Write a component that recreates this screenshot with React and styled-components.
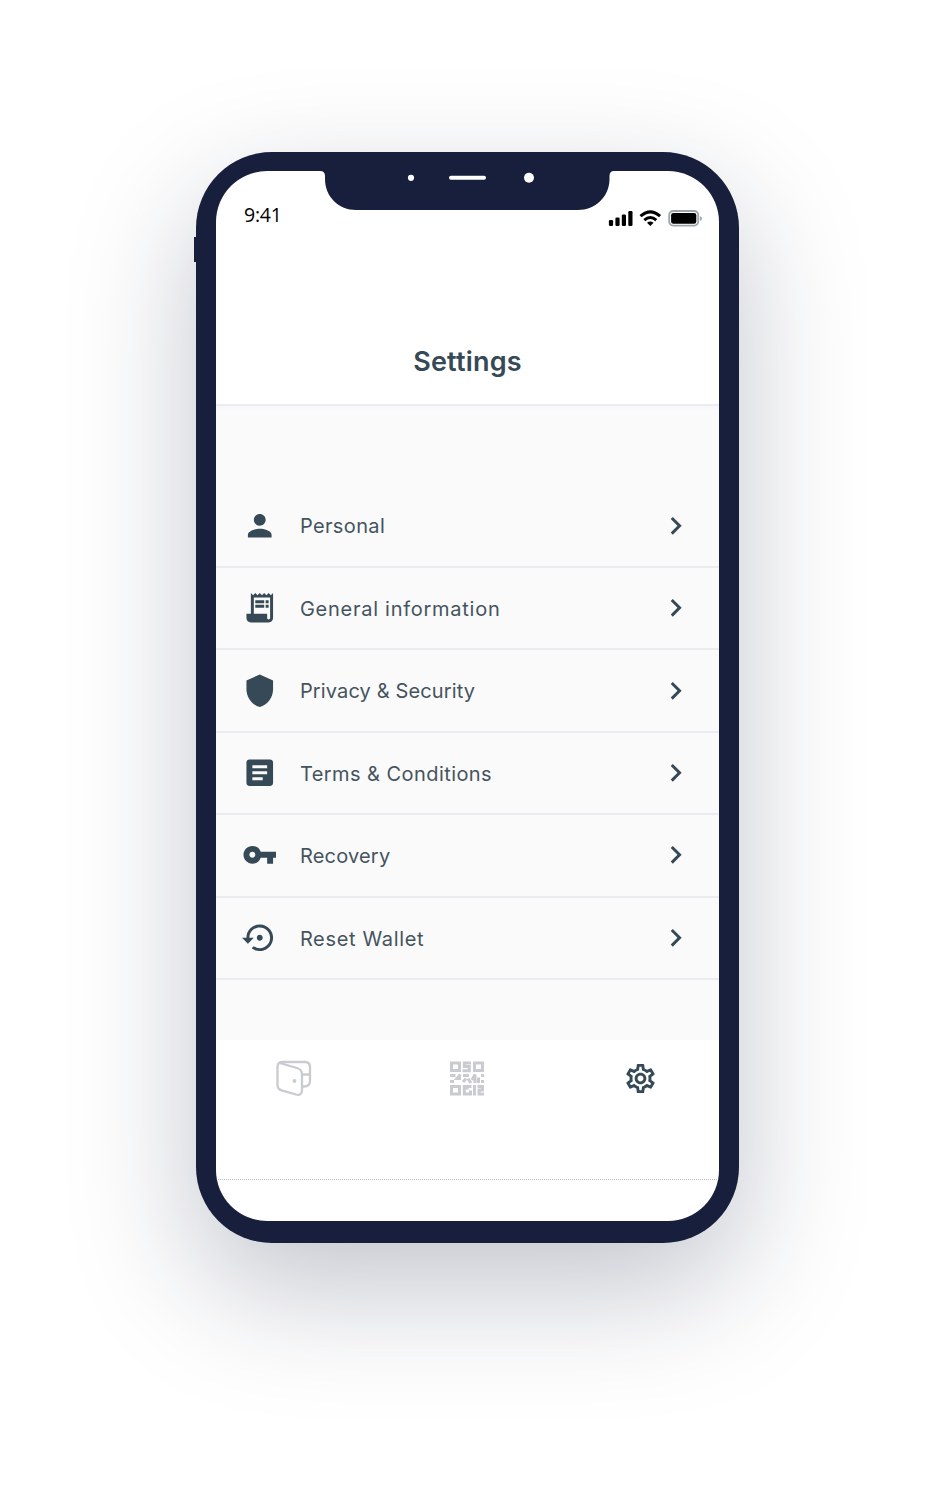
import React from 'react';
import styled, { createGlobalStyle } from 'styled-components';
import {
  MdPerson,
  MdReceiptLong,
  MdShield,
  MdArticle,
  MdVpnKey,
  MdSettingsBackupRestore,
  MdChevronRight,
  MdOutlineSettings,
} from 'react-icons/md';

const Global = createGlobalStyle`
  * { box-sizing: border-box; }
  body { margin: 0; background: #fff; font-family: Inter, "Liberation Sans", sans-serif; }
`;

const Stage = styled.main`
  width: 938px;
  height: 1487px;
  padding: 152px 0 0 196.4px;
  overflow: hidden;
`;

const Phone = styled.div`
  position: relative;
  width: 543px;
  height: 1090.5px;
  padding: 19px 20.4px 21.5px 19.6px;
  border-radius: 76px;
  background: #171f3d;
  box-shadow: 0 46px 126px rgba(23, 31, 61, 0.26);
`;

const SideButton = styled.i`
  position: absolute;
  left: -2.4px;
  top: 85px;
  width: 4px;
  height: 25px;
  background: #171f3d;
`;

const Screen = styled.div`
  display: flex;
  flex-direction: column;
  height: 100%;
  overflow: hidden;
  border-radius: 51px;
  background: #fff;
`;

const Notch = styled.svg`
  position: absolute;
  left: 121.6px;
  top: 18px;
  width: 300px;
  height: 41px;
`;

const StatusBar = styled.div`
  display: flex;
  flex: none;
  justify-content: space-between;
  align-items: flex-start;
  height: 129px;
  padding: 31px 16px 0 28px;
`;

const Clock = styled.span`
  font: 400 19.5px/26px "Open Sans", sans-serif;
  letter-spacing: -0.2px;
  color: #000;
`;

const Indicators = styled.svg`
  width: 95px;
  height: 20px;
  margin-top: 6px;
`;

const Header = styled.header`
  display: flex;
  flex: none;
  justify-content: center;
  height: 106px;
  padding-top: 42px;
  border-bottom: 2px solid #ededf1;
`;

const Title = styled.h1`
  margin: 0;
  font-size: 27px;
  line-height: 39px;
  font-weight: 600;
  letter-spacing: 0.2px;
  color: #364956;
`;

const Content = styled.section`
  flex: none;
  height: 634px;
  padding-top: 79.5px;
  background: linear-gradient(#f6f6f8, #fafafa 4px);
`;

const Row = styled.div`
  display: flex;
  align-items: center;
  height: 82.45px;
  padding: 0 25.4px 0.5px 26px;
  border-bottom: 2px solid #ececf0;
  color: #364956;

  & > svg { flex: none; width: 35.5px; height: 35.5px; }
`;

const Label = styled.span`
  flex: 1;
  margin-left: 22.4px;
  padding-top: 2px;
  font-size: 20px;
  line-height: 28px;
  letter-spacing: ${(p) => p.$tracking}px;
  color: #44545f;
  white-space: nowrap;
`;

const TabBar = styled.nav`
  display: flex;
  flex: none;
  justify-content: space-between;
  align-items: flex-start;
  height: 140px;
  padding: 19px 60px 0 60px;
  border-bottom: 1px dotted #b9bbc1;
`;

const TabIcon = styled.span`
  display: flex;
  align-items: center;
  justify-content: center;
  width: 36px;
  height: 38px;
  color: ${(p) => (p.$active ? '#364956' : '#c9cbd1')};
`;

const rows = [
  { icon: MdPerson, label: 'Personal', tracking: 0.37 },
  { icon: MdReceiptLong, label: 'General information', tracking: 0.74 },
  { icon: MdShield, label: 'Privacy & Security', tracking: 0.14 },
  { icon: MdArticle, label: 'Terms & Conditions', tracking: 0.44 },
  { icon: MdVpnKey, label: 'Recovery', tracking: 0.2 },
  { icon: MdSettingsBackupRestore, label: 'Reset Wallet', tracking: 0.66 },
];

const WalletIcon = () => (
  <svg width="36" height="38" viewBox="0 0 36 38" fill="none" stroke="currentColor" strokeWidth="2.3" strokeLinejoin="round">
    <path d="M6 3H29Q34 3 34 8V22Q34 27.500 28 27.500H26M26 15.500H34" />
    <path d="M6 3Q1.500 3 1.500 8V26Q1.500 30 5.500 31.300L20 35.500Q26 37 26 31V15.500Q26 10.500 21 9L5.500 4.500Q3 3.700 3 5" />
    <circle cx="18.500" cy="22" r="1.900" fill="currentColor" stroke="none" />
  </svg>
);

const QrIcon = () => (
  <svg width="36" height="38" viewBox="0 0 36 38" fill="none" stroke="currentColor" strokeWidth="3">
    <path d="M2.500 4H10.500V11.500H2.500ZM25.500 4H33.500V11.500H25.500ZM2.500 27.500H10.500V35H2.500Z" />
    <path d="M22 4H15.300V7.500H20.300V11.800H13.500M1 16.500H6.500M11.500 15.500L8 19.500H12M1 22.500H5M14 16.500H20M14 23L17 19.500M19 19.500L22 24M23 21L26 15.500V24M29.500 24V18.500M33.500 15V18M33.500 21V24M15.300 26V35H21.500V31.500M18 30.500V27.500H22.500M25.500 26V36.500M28.500 27.500H33.500V31H30V35H35" />
  </svg>
);

export default function App() {
  return (
    <>
      <Global />
      <Stage>
        <Phone>
          <SideButton />
          <Screen>
            <StatusBar>
              <Clock>9:41</Clock>
              <Indicators viewBox="0 0 95 20">
                <rect x="0.900" y="12" width="4.200" height="6" rx="1.200" />
                <rect x="7.400" y="9.500" width="4.200" height="8.500" rx="1.200" />
                <rect x="13.800" y="6.500" width="4.200" height="11.500" rx="1.200" />
                <rect x="20.300" y="3" width="4.200" height="15" rx="1.200" />
                <path d="M32.500 8.200Q42.300 -0.500 52.100 8.200M36.300 12.200Q42.300 6.900 48.300 12.200" fill="none" stroke="#000" strokeWidth="3" />
                <path d="M39 14.800Q42.300 12 45.600 14.800L42.300 18Z" />
                <rect x="61.200" y="3" width="29" height="14.600" rx="4" fill="none" stroke="#a0a5ac" strokeWidth="1.800" />
                <rect x="63.100" y="5" width="25.200" height="10.800" rx="2.300" />
                <path d="M91.900 8V13Q94 12 94 10.500T91.900 8Z" fill="#a0a5ac" />
              </Indicators>
            </StatusBar>
            <Header><Title>Settings</Title></Header>
            <Content>
              {rows.map(({ icon: Icon, label, tracking }) => (
                <Row key={label}>
                  <Icon />
                  <Label $tracking={tracking}>{label}</Label>
                  <MdChevronRight />
                </Row>
              ))}
            </Content>
            <TabBar>
              <TabIcon><WalletIcon /></TabIcon>
              <TabIcon><QrIcon /></TabIcon>
              <TabIcon $active><MdOutlineSettings size={35} /></TabIcon>
            </TabBar>
          </Screen>
          <Notch viewBox="0 0 300 41">
            <path d="M0 0H300V1H296Q291.500 1 291.500 6V9C291.500 27 277 40 260 40H38C21 40 7 27 7 9V6Q7 1 2 1H0Z" fill="#171f3d" />
            <circle cx="93" cy="7.800" r="3.100" fill="#fff" />
            <rect x="131" y="5.800" width="37" height="4" rx="2" fill="#fff" />
            <circle cx="211" cy="7.800" r="5" fill="#fff" />
          </Notch>
        </Phone>
      </Stage>
    </>
  );
}
